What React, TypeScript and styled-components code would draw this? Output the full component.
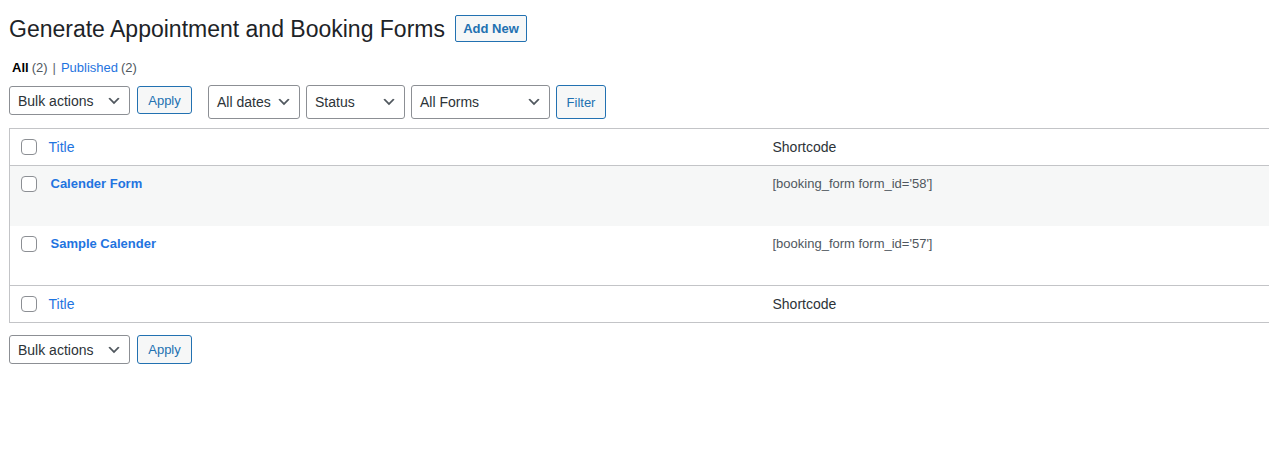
import React from "react";
import styled, { createGlobalStyle } from "styled-components";

const Global = createGlobalStyle`
  html, body { margin: 0; padding: 0; background: #fff; overflow: hidden; }
  body {
    font-family: "Liberation Sans", Arial, sans-serif;
    font-size: 13px;
    color: #3c434a;
  }
  * { box-sizing: border-box; }
`;

const LINK = "#1f74e0";

const Wrap = styled.div`
  padding: 14px 0 0 9px;
  width: 1300px;
`;

const TitleRow = styled.div`
  display: flex;
  align-items: center;
  gap: 10px;
  height: 30px;
`;

const Heading = styled.h1`
  margin: 0;
  font-size: 23px;
  font-weight: 400;
  line-height: 30px;
  color: #1d2327;
`;

const AddNew = styled.a`
  display: inline-flex;
  align-items: center;
  width: 72px;
  justify-content: center;
  height: 27px;
  margin-top: -1px;
  border: 1px solid #2271b1;
  border-radius: 2px;
  background: #f6f7f7;
  color: #2271b1;
  font-size: 13px;
  font-weight: 600;
  text-decoration: none;
`;

const Views = styled.ul`
  list-style: none;
  margin: 10px 0 0 3px;
  padding: 0;
  display: flex;
  align-items: center;
  height: 26px;
  font-size: 13px;
  color: #646970;
`;

const ViewItem = styled.li`
  display: flex;
  align-items: center;
`;

const ViewLink = styled.a<{ $current?: boolean }>`
  color: ${(p) => (p.$current ? "#000" : LINK)};
  font-weight: ${(p) => (p.$current ? 600 : 400)};
  text-decoration: none;
`;

const Count = styled.span`
  color: #50575e;
  font-weight: 400;
  margin-left: 3px;
`;

const Sep = styled.span`
  margin: 0 5px 0 5px;
  color: #646970;
`;

const TableNav = styled.div<{ $top?: boolean }>`
  display: flex;
  align-items: flex-start;
  margin: ${(p) => (p.$top ? "5px 0 9px" : "12px 0 0")};
`;

const Group = styled.div<{ $gap: number; $ml?: number }>`
  display: flex;
  align-items: flex-start;
  gap: ${(p) => p.$gap}px;
  margin-left: ${(p) => p.$ml ?? 0}px;
`;

const SelectBox = styled.div<{ $w: number; $h: number; $mt?: number }>`
  position: relative;
  display: flex;
  align-items: center;
  width: ${(p) => p.$w}px;
  height: ${(p) => p.$h}px;
  margin-top: ${(p) => p.$mt ?? 0}px;
  padding: 0 24px 0 8px;
  border: 1px solid #8c8f94;
  border-radius: 3px;
  background: #fff;
  color: #2c3338;
  font-size: 14px;
  svg {
    position: absolute;
    right: 7px;
    top: 50%;
    margin-top: -8px;
  }
`;

const Button = styled.button<{ $w: number; $h: number; $mt?: number }>`
  width: ${(p) => p.$w}px;
  height: ${(p) => p.$h}px;
  margin-top: ${(p) => p.$mt ?? 0}px;
  padding: 0;
  border: 1px solid #2271b1;
  border-radius: 3px;
  background: #f6f7f7;
  color: #2271b1;
  font-family: inherit;
  font-size: 13px;
`;

const Table = styled.table`
  width: 1290px;
  border-collapse: collapse;
  table-layout: fixed;
  border: 1px solid #c3c4c7;
  background: #fff;
`;

const CheckCol = styled.col`
  width: 30px;
`;
const TitleCol = styled.col`
  width: 724px;
`;

const HeadCell = styled.th`
  height: 37px;
  padding: 0 9px;
  text-align: left;
  font-weight: 400;
  font-size: 14px;
  color: #2c3338;
  vertical-align: middle;
`;

const CheckCell = styled.td<{ $head?: boolean }>`
  padding: ${(p) => (p.$head ? "0 0 0 11px" : "10px 0 0 11px")};
  vertical-align: ${(p) => (p.$head ? "middle" : "top")};
`;

const HeadRow = styled.tr<{ $foot?: boolean }>`
  border-${(p) => (p.$foot ? "top" : "bottom")}: 1px solid #c3c4c7;
`;

const BodyRow = styled.tr<{ $alt?: boolean }>`
  background: ${(p) => (p.$alt ? "#f6f7f7" : "#fff")};
`;

const Cell = styled.td<{ $pl?: number }>`
  height: 60px;
  padding: 10px 10px 0 ${(p) => p.$pl ?? 9}px;
  vertical-align: top;
  font-size: 13px;
  color: #50575e;
`;

const Check = styled.span`
  display: block;
  width: 16px;
  height: 16px;
  border: 1px solid #8c8f94;
  border-radius: 4px;
  background: #fff;
`;

const HeadLink = styled.a`
  color: ${LINK};
  text-decoration: none;
  font-size: 14px;
`;

const RowTitle = styled.a`
  color: ${LINK};
  font-weight: 700;
  font-size: 13px;
  text-decoration: none;
`;

const Chevron = () => (
  <svg width="16" height="16" viewBox="0 0 20 20" fill="#50575e">
    <path d="M5 6l5 5 5-5 2 1-7 7-7-7z" />
  </svg>
);

const Select = ({ label, w, h, mt }: { label: string; w: number; h: number; mt?: number }) => (
  <SelectBox $w={w} $h={h} $mt={mt}>
    {label}
    <Chevron />
  </SelectBox>
);

const rows = [
  { title: "Calender Form", id: "58" },
  { title: "Sample Calender", id: "57" },
];

export default function App() {
  return (
    <>
      <Global />
      <Wrap>
        <TitleRow>
          <Heading>Generate Appointment and Booking Forms</Heading>
          <AddNew href="#">Add New</AddNew>
        </TitleRow>
        <Views>
          <ViewItem>
            <ViewLink $current href="#">All</ViewLink>
            <Count>(2)</Count>
            <Sep>|</Sep>
          </ViewItem>
          <ViewItem>
            <ViewLink href="#">Published</ViewLink>
            <Count>(2)</Count>
          </ViewItem>
        </Views>
        <TableNav $top>
          <Group $gap={7}>
            <Select label="Bulk actions" w={121} h={29} mt={1} />
            <Button $w={55} $h={28} $mt={1}>Apply</Button>
          </Group>
          <Group $gap={6} $ml={16}>
            <Select label="All dates" w={92} h={34} />
            <Select label="Status" w={99} h={34} />
            <Select label="All Forms" w={139} h={34} />
            <Button $w={50} $h={34}>Filter</Button>
          </Group>
        </TableNav>
        <Table>
          <colgroup>
            <CheckCol />
            <TitleCol />
            <col />
          </colgroup>
          <thead>
            <HeadRow>
              <CheckCell $head>
                <Check />
              </CheckCell>
              <HeadCell>
                <HeadLink href="#">Title</HeadLink>
              </HeadCell>
              <HeadCell>Shortcode</HeadCell>
            </HeadRow>
          </thead>
          <tbody>
            {rows.map((r, i) => (
              <BodyRow key={r.id} $alt={i % 2 === 0}>
                <CheckCell>
                  <Check />
                </CheckCell>
                <Cell $pl={11}>
                  <RowTitle href="#">{r.title}</RowTitle>
                </Cell>
                <Cell>[booking_form form_id='{r.id}']</Cell>
              </BodyRow>
            ))}
          </tbody>
          <tfoot>
            <HeadRow $foot>
              <CheckCell $head>
                <Check />
              </CheckCell>
              <HeadCell>
                <HeadLink href="#">Title</HeadLink>
              </HeadCell>
              <HeadCell>Shortcode</HeadCell>
            </HeadRow>
          </tfoot>
        </Table>
        <TableNav>
          <Group $gap={7}>
            <Select label="Bulk actions" w={121} h={29} />
            <Button $w={55} $h={29}>Apply</Button>
          </Group>
        </TableNav>
      </Wrap>
    </>
  );
}
